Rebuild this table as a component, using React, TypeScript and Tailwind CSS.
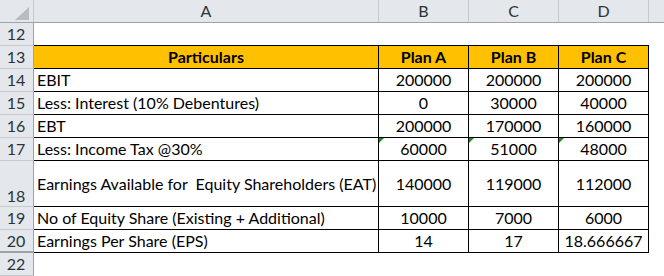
const rows = [
  { n: "14", label: "EBIT", values: ["200000", "200000", "200000"] },
  { n: "15", label: "Less: Interest (10% Debentures)", values: ["0", "30000", "40000"] },
  { n: "16", label: "EBT", values: ["200000", "170000", "160000"] },
  { n: "17", label: "Less: Income Tax @30%", values: ["60000", "51000", "48000"], flagged: true },
  { n: "18", label: "Earnings Available for  Equity Shareholders (EAT)", values: ["140000", "119000", "112000"], tall: true },
  { n: "19", label: "No of Equity Share (Existing + Additional)", values: ["10000", "7000", "6000"] },
  { n: "20", label: "Earnings Per Share (EPS)", values: ["14", "17", "18.666667"], hiddenBelow: true },
];

function RowHeader({ n, tall, hiddenBelow }: { n: string; tall?: boolean; hiddenBelow?: boolean }) {
  return (
    <div
      className={
        "w-[34px] shrink-0 bg-[#e4e7eb] border-r border-r-[#9ea3a9] text-[#2c3338] font-normal flex justify-center pr-[1px] " +
        (tall ? "items-end pb-[2px] " : "items-center ") +
        (hiddenBelow ? "border-b-2 border-b-[#9ea3a9]" : "border-b border-b-[#c6cace]")
      }
    >
      {n}
    </div>
  );
}

function GreenFlag() {
  return (
    <div className="absolute left-0 top-0 w-0 h-0 border-t-[5px] border-r-[5px] border-t-[#1f8a1f] border-r-transparent" />
  );
}

export default function App() {
  return (
    <div
      className="w-[664px] h-[276px] overflow-hidden bg-white text-[16px] leading-none text-black"
      style={{ fontFamily: "Lato, 'Liberation Sans', sans-serif" }}
    >
      {/* column headers */}
      <div className="flex h-[23px] bg-[#e4e7eb] text-[#2c3338] border-b border-b-[#9ea3a9]">
        <div className="w-[34px] shrink-0 border-r border-r-[#c6cace] flex items-end justify-end pr-[4px] pb-[2px]">
          <svg width="14" height="13" viewBox="0 0 14 13">
            <polygon points="14,0 14,13 0,13" fill="#b7bcc2" />
          </svg>
        </div>
        <div className="w-[345px] shrink-0 border-r border-r-[#c6cace] flex items-center justify-center">A</div>
        <div className="w-[90px] shrink-0 border-r border-r-[#c6cace] flex items-center justify-center">B</div>
        <div className="w-[90px] shrink-0 border-r border-r-[#c6cace] flex items-center justify-center">C</div>
        <div className="w-[90px] shrink-0 border-r border-r-[#c6cace] flex items-center justify-center">D</div>
        <div className="flex-1" />
      </div>

      {/* row 12 */}
      <div className="flex h-[23px]">
        <RowHeader n="12" />
        <div className="w-[615px] shrink-0 border-b border-b-black" />
      </div>

      {/* row 13 */}
      <div className="flex h-[23px]">
        <RowHeader n="13" />
        <div className="w-[345px] shrink-0 bg-[#ffc000] font-bold border-r border-b border-black flex items-center justify-center">
          Particulars
        </div>
        {["Plan A", "Plan B", "Plan C"].map((p) => (
          <div
            key={p}
            className="w-[90px] shrink-0 bg-[#ffc000] font-bold border-r border-b border-black flex items-center justify-center"
          >
            {p}
          </div>
        ))}
      </div>

      {rows.map((r) => (
        <div key={r.n} className={"flex " + (r.tall ? "h-[46px]" : "h-[23px]")}>
          <RowHeader n={r.n} tall={r.tall} hiddenBelow={r.hiddenBelow} />
          <div className="w-[345px] shrink-0 border-r border-b border-black flex items-center pl-[3px] whitespace-pre">
            {r.label}
          </div>
          {r.values.map((v, i) => (
            <div
              key={i}
              className="relative w-[90px] shrink-0 border-r border-b border-black flex items-center justify-center"
            >
              {r.flagged && <GreenFlag />}
              {v}
            </div>
          ))}
        </div>
      ))}

      {/* row 22 */}
      <div className="flex h-[23px]">
        <RowHeader n="22" />
      </div>
    </div>
  );
}
